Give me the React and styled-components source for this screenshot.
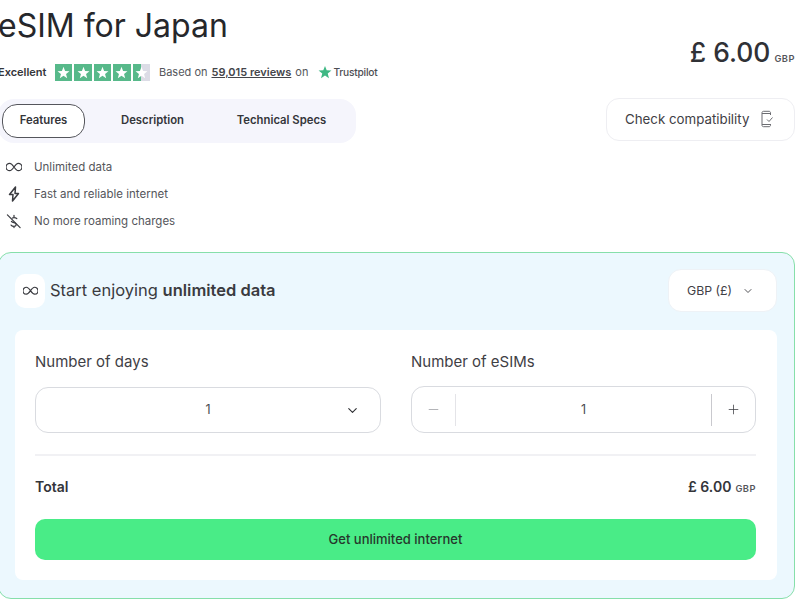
import React from 'react';
import styled, { createGlobalStyle } from 'styled-components';
import { ChevronDown, Minus, Plus } from 'lucide-react';

const Global = createGlobalStyle`
  html, body { margin: 0; padding: 0; background: #fff; overflow: hidden; }
  body { font-family: Inter, "Noto Sans", "Liberation Sans", sans-serif; color: #2f3034; }
  * { box-sizing: border-box; }
`;

const Page = styled.div`
  width: 797px;
  height: 600px;
  margin-left: -2px;
  display: flex;
  flex-direction: column;
`;
const Top = styled.header`
  display: flex;
  justify-content: space-between;
  height: 143px;
`;
const Left = styled.div`
  display: flex;
  flex-direction: column;
`;
const Title = styled.h1`
  margin: 6px 0 0;
  font-size: 32px;
  line-height: 40px;
  font-weight: 400;
  color: #26272b;
`;
const Rating = styled.div`
  display: flex;
  align-items: center;
  height: 20px;
  margin-top: 16px;
  font-size: 11px;
  color: #55565b;
`;
const Excellent = styled.span`
  font-weight: 600;
  color: #34353a;
  width: 57px;
`;
const Stars = styled.div`
  display: flex;
  gap: 2px;
  margin-right: 9px;
`;
const Star = styled.span`
  width: 17.4px;
  height: 17px;
  display: flex;
  align-items: center;
  justify-content: center;
  background: ${p => p.$half ? 'linear-gradient(90deg,#57b98a 45%,#dcdce6 45%)' : '#57b98a'};
`;
const Reviews = styled.a`
  font-weight: 600;
  color: #44454a;
  text-decoration: underline;
  margin: 0 4px;
`;
const Trust = styled.span`
  display: flex;
  align-items: center;
  gap: 1px;
  margin-left: 10px;
  font-size: 10.2px;
  font-weight: 500;
  color: #4d4e53;
  letter-spacing: -0.2px;
`;
const Tabs = styled.nav`
  display: flex;
  align-items: center;
  width: 358px;
  height: 44px;
  margin-top: 17px;
  padding-left: 4px;
  background: #f5f5fc;
  border-radius: 16px;
`;
const Tab = styled.button`
  width: ${p => p.$w}px;
  height: 34px;
  padding: 0 0 2px;
  font: 600 11.3px Inter, sans-serif;
  color: #34353a;
  background: ${p => p.$active ? '#fff' : 'transparent'};
  border: ${p => p.$active ? '1px solid #55565c' : '0'};
  border-radius: 15px;
`;
const Right = styled.div`
  display: flex;
  flex-direction: column;
  align-items: flex-end;
`;
const Price = styled.div`
  margin-top: 33px;
  height: 38px;
  display: flex;
  align-items: baseline;
  gap: 4px;
  font-size: 26.4px;
  line-height: 38px;
  font-weight: 500;
  color: #303136;
`;
const Unit = styled.span`
  font-size: 9.3px;
  font-weight: 600;
  color: #55565b;
  letter-spacing: 0.5px;
`;
const Check = styled.button`
  display: flex;
  align-items: center;
  justify-content: space-between;
  width: 189px;
  height: 43px;
  margin-top: 27px;
  padding: 0 20px 2px 18px;
  background: #fff;
  border: 1px solid #eeeef2;
  border-radius: 13px;
  font: 400 13.3px Inter, sans-serif;
  color: #3f4045;
`;
const Features = styled.ul`
  list-style: none;
  margin: 14px 0 0;
  padding: 0 0 0 8px;
  display: flex;
  flex-direction: column;
  gap: 7px;
  height: 95px;
`;
const Feature = styled.li`
  display: flex;
  align-items: center;
  gap: 12px;
  height: 20px;
  font-size: 11.5px;
  color: #55565b;
`;
const IconSlot = styled.span`
  display: flex;
  justify-content: center;
  width: 16px;
  color: #3a3b40;
`;
const Panel = styled.section`
  height: 347px;
  background: #ecf8fe;
  border: 1px solid #86dfaa;
  border-radius: 13px;
  padding: 16px 17px 17px 16px;
  display: flex;
  flex-direction: column;
`;
const PanelHead = styled.div`
  display: flex;
  align-items: center;
  justify-content: space-between;
  height: 43px;
`;
const PanelTitle = styled.div`
  display: flex;
  align-items: center;
  gap: 5px;
  font-size: 16.5px;
  color: #3a3b40;
`;
const TitleText = styled.span`
  padding-bottom: 2px;
`;
const Strong = styled.strong`
  font-weight: 600;
`;
const Badge = styled.span`
  width: 30px;
  height: 34px;
  display: flex;
  align-items: center;
  justify-content: center;
  background: #fff;
  border-radius: 10px;
  color: #3a3b40;
`;
const Currency = styled.button`
  width: 109px;
  height: 43px;
  padding: 0 4px 0 0;
  display: flex;
  align-items: center;
  justify-content: center;
  gap: 10px;
  background: #fff;
  border: 1px solid #eef2f6;
  border-radius: 13px;
  font: 400 12.3px Inter, sans-serif;
  color: #3f4045;
`;
const Card = styled.div`
  margin-top: 18px;
  height: 250px;
  background: #fff;
  border-radius: 8px;
  padding: 21px 21px 20px 20px;
  display: flex;
  flex-direction: column;
`;
const Fields = styled.div`
  display: grid;
  grid-template-columns: 346px 345px;
  justify-content: space-between;
  padding-bottom: 21px;
  border-bottom: 2px solid #f1f1f4;
`;
const Field = styled.div`
  display: flex;
  flex-direction: column;
  gap: 15px;
`;
const Label = styled.label`
  font-size: 15px;
  line-height: 21px;
  color: #3f4045;
`;
const Select = styled.div`
  height: 46px;
  padding-bottom: 2px;
  position: relative;
  display: flex;
  align-items: center;
  justify-content: center;
  border: 1px solid #d9dbe0;
  border-radius: 13px;
  font-size: 12.5px;
  color: #4a4b50;
`;
const Caret = styled.span`
  position: absolute;
  right: 20px;
  top: 15px;
  display: flex;
  color: #2f3034;
`;
const Stepper = styled.div`
  height: 47px;
  margin-top: -1px;
  display: flex;
  align-items: center;
  border: 1px solid #d9dbe0;
  border-radius: 13px;
`;
const StepButton = styled.span`
  width: 44px;
  height: 32px;
  display: flex;
  align-items: center;
  justify-content: center;
  color: ${p => p.$muted ? '#9a9ba0' : '#3a3b40'};
  ${p => p.$side === 'left' ? 'border-right: 1px solid #e4e4e8;' : 'border-left: 1px solid #c9c9ce;'}
`;
const StepValue = styled.span`
  flex: 1;
  text-align: center;
  font-size: 12.5px;
  color: #4a4b50;
`;
const TotalRow = styled.div`
  display: flex;
  align-items: center;
  justify-content: space-between;
  height: 62px;
  padding-bottom: 1px;
  font-size: 14px;
  font-weight: 600;
  color: #34353a;
`;
const Amount = styled.span`
  display: flex;
  align-items: baseline;
  gap: 4px;
`;
const Cta = styled.button`
  height: 41px;
  margin-top: 1px;
  width: 100%;
  padding: 0 0 2px;
  background: #49ec87;
  border: 0;
  border-radius: 10px;
  font: 500 13px Inter, sans-serif;
  color: #26372c;
`;

const StarGlyph = ({ fill = '#fff', size = 13 }) => (
  <svg width={size} height={size} viewBox="0 0 24 24" aria-hidden="true">
    <path fill={fill} d="M12 1.5l2.9 7.6 8.1.4-6.3 5.1 2.1 7.9L12 18.1l-6.8 4.4 2.1-7.9L1 9.5l8.1-.4z" />
  </svg>
);
const InfinityGlyph = ({ width = 16 }) => (
  <svg width={width} height={width * 0.625} viewBox="0 0 16 10" fill="none" stroke="currentColor" strokeWidth="1.2" aria-hidden="true">
    <path d="M8 5C6.500 2.800 5 1.300 3.700 1.300a3.700 3.700 0 0 0 0 7.400C5 8.700 6.500 7.200 8 5c1.500-2.200 3-3.700 4.300-3.700a3.700 3.700 0 0 1 0 7.400C11 8.700 9.500 7.200 8 5z" />
  </svg>
);
const Bolt = () => (
  <svg width="12" height="16" viewBox="0 0 12 16" fill="none" stroke="currentColor" strokeWidth="1.5" strokeLinejoin="round" aria-hidden="true">
    <path d="M7.500 1L1.500 8.500H5L4.500 15l6-7.500H7z" />
  </svg>
);
const NoRoaming = () => (
  <svg width="17" height="18" viewBox="0 0 17 18" fill="none" stroke="currentColor" strokeWidth="1.3" strokeLinecap="round" strokeLinejoin="round" aria-hidden="true">
    <path d="M1.500 2.500L15 16" />
    <path d="M8.500 3v2.500M11.500 6.500C10.800 5.700 9.800 5.400 8.600 5.400c-.7 0-1.300.2-1.800.5" />
    <path d="M5.800 9.500c.7.6 1.700.9 2.700 1.200 1.300.4 2.300 1 2.300 2 0 1.200-1.100 2-2.400 2-1.200 0-2.300-.5-3-1.400M8.500 14.700V16" />
  </svg>
);
const PhoneCheck = () => (
  <svg width="13" height="18" viewBox="0 0 13 18" fill="none" stroke="#6c6d72" strokeWidth="1" aria-hidden="true">
    <path d="M9.500 5V2.800c0-.9-.6-1.500-1.500-1.500H2.500C1.600 1.300 1 1.900 1 2.800v12.400c0 .9.600 1.500 1.500 1.500H8c.9 0 1.500-.6 1.500-1.500V14" />
    <path d="M1 3.500h8.500M1 14.500h8.500" />
    <path d="M6 9.500l2 2 3.500-4" />
  </svg>
);

export default function App() {
  return (
    <Page>
      <Global />
      <Top>
        <Left>
          <Title>eSIM for Japan</Title>
          <Rating>
            <Excellent>Excellent</Excellent>
            <Stars>
              {[0, 1, 2, 3].map(i => <Star key={i}><StarGlyph /></Star>)}
              <Star $half><StarGlyph /></Star>
            </Stars>
            <span>Based on</span>
            <Reviews>59,015 reviews</Reviews>
            <span>on</span>
            <Trust><StarGlyph fill="#3fb884" size={14} />Trustpilot</Trust>
          </Rating>
          <Tabs>
            <Tab $active $w={83}>Features</Tab>
            <Tab $w={135}>Description</Tab>
            <Tab $w={123}>Technical Specs</Tab>
          </Tabs>
        </Left>
        <Right>
          <Price>£ 6.00<Unit>GBP</Unit></Price>
          <Check>Check compatibility<PhoneCheck /></Check>
        </Right>
      </Top>
      <Features>
        <Feature><IconSlot><InfinityGlyph /></IconSlot>Unlimited data</Feature>
        <Feature><IconSlot><Bolt /></IconSlot>Fast and reliable internet</Feature>
        <Feature><IconSlot><NoRoaming /></IconSlot>No more roaming charges</Feature>
      </Features>
      <Panel>
        <PanelHead>
          <PanelTitle>
            <Badge><InfinityGlyph width={15} /></Badge>
            <TitleText>Start enjoying <Strong>unlimited data</Strong></TitleText>
          </PanelTitle>
          <Currency>GBP (£)<ChevronDown size={12} strokeWidth={1.8} /></Currency>
        </PanelHead>
        <Card>
          <Fields>
            <Field>
              <Label>Number of days</Label>
              <Select>1<Caret><ChevronDown size={15} strokeWidth={1.8} /></Caret></Select>
            </Field>
            <Field>
              <Label>Number of eSIMs</Label>
              <Stepper>
                <StepButton $side="left" $muted><Minus size={15} strokeWidth={1.2} /></StepButton>
                <StepValue>1</StepValue>
                <StepButton $side="right"><Plus size={15} strokeWidth={1.2} /></StepButton>
              </Stepper>
            </Field>
          </Fields>
          <TotalRow>
            <span>Total</span>
            <Amount>£ 6.00<Unit>GBP</Unit></Amount>
          </TotalRow>
          <Cta>Get unlimited internet</Cta>
        </Card>
      </Panel>
    </Page>
  );
}
